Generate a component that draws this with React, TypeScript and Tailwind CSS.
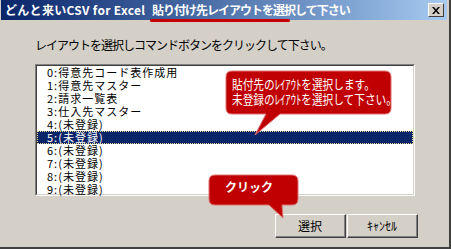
const jp = "font-['Noto_Sans_CJK_JP',sans-serif]"

const items = [
  '0:得意先コード表作成用',
  '1:得意先マスター',
  '2:請求一覧表',
  '3:仕入先マスター',
  '4:(未登録)',
  '5:(未登録)',
  '6:(未登録)',
  '7:(未登録)',
  '8:(未登録)',
  '9:(未登録)',
]

// classic raised button
function WinButton({ label }: { label: string }) {
  return (
    <div className="w-[71px] h-[24px] border-t border-l border-t-white border-l-white border-r border-b border-r-[#404040] border-b-[#404040]">
      <div className="w-full h-full flex items-center justify-center border-r border-b border-r-[#808080] border-b-[#808080] text-[12px] leading-none text-black">
        {label}
      </div>
    </div>
  )
}

export default function App() {
  return (
    <div className={`relative w-[451px] h-[249px] overflow-hidden bg-[#d4d0c8] ${jp}`}>
      <div className="w-full h-full flex flex-col border-r-2 border-b-2 border-r-[#404040] border-b-[#404040]">
        {/* Title bar */}
        <div className="ml-[1px] mr-[2px] h-[20px] flex items-center justify-between bg-gradient-to-r from-[#0a246a] to-[#a6caf0] pl-[4px] pr-[3px]">
          <div className="flex items-center text-white font-bold text-[12px] leading-none whitespace-nowrap">
            <span className="w-[147px] tracking-[0.3px]">どんと来いCSV for Excel</span>
            <span className="tracking-[-1px]">貼り付け先レイアウトを選択して下さい</span>
          </div>
          <div className="w-[16px] h-[14px] bg-[#d4d0c8] border-t border-l border-t-white border-l-white border-r border-b border-r-[#404040] border-b-[#404040] flex items-center justify-center">
            <svg width="8" height="7" viewBox="0 0 8 7">
              <path d="M0 0 L2 0 L4 2.5 L6 0 L8 0 L5 3.5 L8 7 L6 7 L4 4.5 L2 7 L0 7 L3 3.5 Z" fill="#000" />
            </svg>
          </div>
        </div>

        {/* Body */}
        <div className="flex-1 flex flex-col pl-[35px] pr-[34px]">
          <p className="mt-[18px] text-[12px] leading-[14px] tracking-[-1px] text-black whitespace-nowrap">
            レイアウトを選択しコマンドボタンをクリックして下さい。
          </p>

          {/* List box */}
          <div className="mt-[12px] w-[380px] h-[132px] border-t border-l border-t-[#808080] border-l-[#808080] border-r border-b border-r-white border-b-white">
            <div className="w-full h-full bg-white border-t border-l border-t-[#404040] border-l-[#404040] border-r border-b border-r-[#d4d0c8] border-b-[#d4d0c8] flex flex-col">
              {items.map((item, i) => (
                <div
                  key={item}
                  className={
                    i === 5
                      ? 'h-[13px] flex items-center pl-[10px] text-[11px] leading-[13px] tracking-[1px] text-white bg-[#0a246a] outline-1 outline-dotted outline-[#e8d890] -outline-offset-1'
                      : 'h-[13px] flex items-center pl-[10px] text-[11px] leading-[13px] tracking-[1px] text-black'
                  }
                >
                  {item}
                </div>
              ))}
            </div>
          </div>

          {/* Buttons */}
          <div className="mt-[18px] flex justify-end gap-[1px] mr-[-3px]">
            <WinButton label="選択" />
            <WinButton label="ｷｬﾝｾﾙ" />
          </div>
        </div>
      </div>

      {/* red underline on title */}
      <div className="absolute left-[150px] top-[19px] w-[140px] h-[3px] rounded-full bg-[#c80000]" />

      {/* callout shapes */}
      <svg className="absolute left-0 top-0 pointer-events-none" width="451" height="249">
        <path
          d="M232 71 H385 Q391 71 391 77 V108 Q391 114 385 114 H280 L255 135 L266 114 H232 Q226 114 226 108 V77 Q226 71 232 71 Z"
          fill="#c00000"
          stroke="#e07070"
          strokeWidth="1"
        />
        <path
          d="M215 175 H292 Q298 175 298 181 V199 Q298 205 292 205 H282 L283 218 L269 205 H215 Q209 205 209 199 V181 Q209 175 215 175 Z"
          fill="#c00000"
          stroke="#e07070"
          strokeWidth="1"
        />
      </svg>
      <div className="absolute left-[232px] top-[76px] text-white text-[13px] leading-[15px] whitespace-nowrap origin-left scale-x-[0.82]">
        <div>貼付先のﾚｲｱｳﾄを選択します。</div>
        <div>未登録のﾚｲｱｳﾄを選択して下さい。</div>
      </div>
      <div className="absolute left-[225px] top-[180px] text-white font-bold text-[12px] leading-[14px] whitespace-nowrap">
        クリック
      </div>
    </div>
  )
}
